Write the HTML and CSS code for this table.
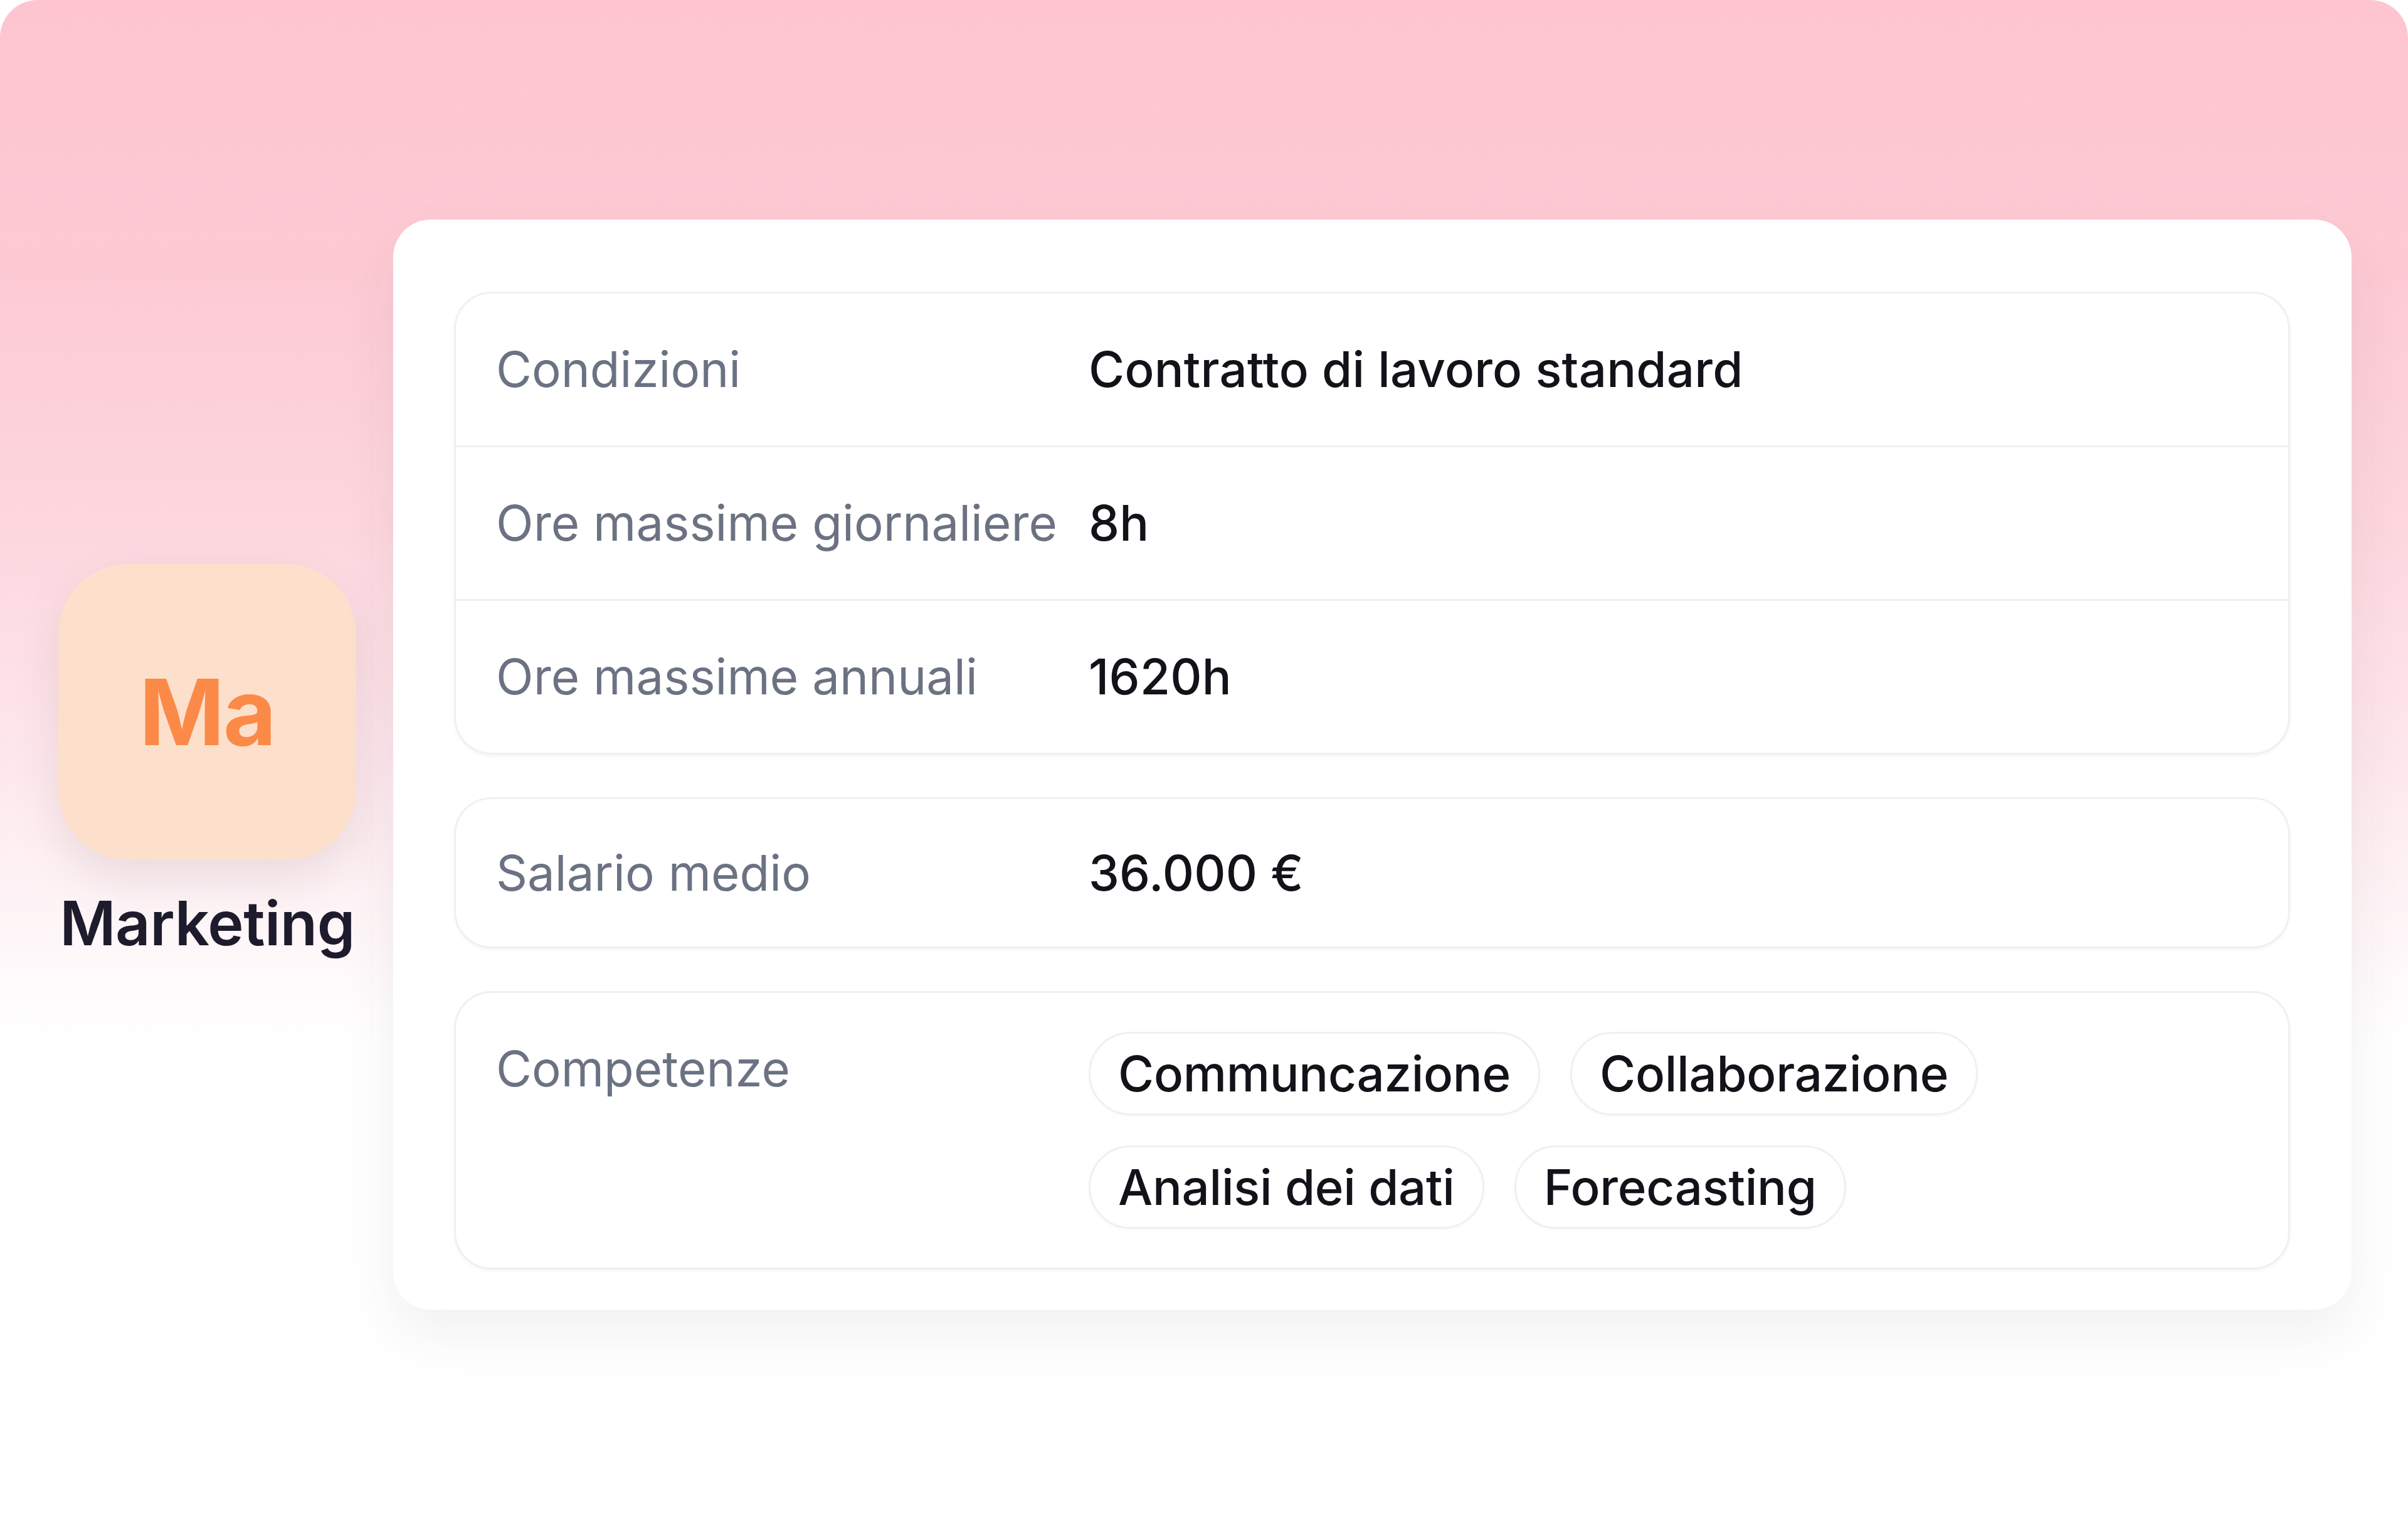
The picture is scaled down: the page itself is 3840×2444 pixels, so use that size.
FILE: index.html
```html
<!DOCTYPE html>
<html lang="it">
<head>
<meta charset="utf-8">
<title>Marketing</title>
<link rel="stylesheet" href="styles.css">
</head>
<body>
<div class="page">
  <div class="stage">
    <div class="team">
      <div class="team-icon">Ma</div>
      <div class="team-name">Marketing</div>
    </div>
    <div class="card">
      <div class="group">
        <div class="row">
          <span class="label">Condizioni</span>
          <span class="value">Contratto di lavoro standard</span>
        </div>
        <div class="row">
          <span class="label">Ore massime giornaliere</span>
          <span class="value">8h</span>
        </div>
        <div class="row">
          <span class="label">Ore massime annuali</span>
          <span class="value">1620h</span>
        </div>
      </div>
      <div class="group">
        <div class="row row-single">
          <span class="label">Salario medio</span>
          <span class="value">36.000 €</span>
        </div>
      </div>
      <div class="group">
        <div class="row row-skills">
          <span class="label">Competenze</span>
          <div class="chips">
            <span class="chip">Communcazione</span>
            <span class="chip">Collaborazione</span>
            <span class="chip">Analisi dei dati</span>
            <span class="chip">Forecasting</span>
          </div>
        </div>
      </div>
    </div>
  </div>
</div>
</body>
</html>
```
FILE: styles.css
```css
html, body {
  margin: 0;
  padding: 0;
}

body {
  width: 3840px;
  height: 2444px;
  overflow: hidden;
  background: #ffffff;
  font-family: Inter, "Noto Sans", "Liberation Sans", sans-serif;
}

.page {
  height: 2444px;
  border-radius: 60px 60px 0 0;
  background: linear-gradient(180deg, #fec5d0 0%, #fdcad4 18%, #fdd6de 34%, #fde8ed 50%, #fef5f7 60%, #ffffff 68%);
}

.stage {
  display: flex;
  align-items: center;
  padding: 350px 0 0 93px;
}

.team {
  width: 475px;
  margin-right: 59px;
  padding-bottom: 8px;
  display: flex;
  flex-direction: column;
  align-items: center;
}

.team-icon {
  width: 475px;
  height: 472px;
  border-radius: 112px;
  background: #fde0cb;
  color: #fb8a48;
  font-weight: 700;
  font-size: 146px;
  letter-spacing: -2px;
  display: flex;
  align-items: center;
  justify-content: center;
  box-shadow: 0 30px 70px rgba(120, 90, 100, 0.14);
}

.team-name {
  margin-top: 42px;
  font-size: 97px;
  line-height: 118px;
  font-weight: 600;
  color: #1d1b2c;
  letter-spacing: -0.5px;
}

.card {
  width: 3123px;
  box-sizing: border-box;
  padding: 115px 98px 64px 97px;
  background: #ffffff;
  border-radius: 60px;
  box-shadow: 0 40px 90px rgba(60, 50, 60, 0.07);
  display: flex;
  flex-direction: column;
  gap: 68px;
}

.group {
  border: 3px solid #eef0f2;
  border-radius: 60px;
  box-shadow: 0 3px 5px rgba(0, 0, 0, 0.035);
  background: #ffffff;
}

.row {
  display: flex;
  align-items: center;
  min-height: 242px;
  padding: 0 64px;
  font-size: 78px;
  line-height: 1.2;
}

.row + .row {
  border-top: 3px solid #eef0f2;
}

.row-single {
  min-height: 235px;
}

.row-skills {
  align-items: flex-start;
  padding-top: 62px;
  padding-bottom: 62px;
  min-height: 0;
}

.row-skills .label {
  padding-top: 12px;
}

.label {
  width: 945px;
  flex-shrink: 0;
  color: #6b7282;
  font-weight: 400;
}

.value {
  color: #111318;
  font-weight: 450;
  letter-spacing: 0.2px;
}

.chips {
  flex: 1;
  display: flex;
  flex-wrap: wrap;
  gap: 48px;
}

.chip {
  height: 133px;
  box-sizing: border-box;
  display: inline-flex;
  align-items: center;
  padding: 0 44px;
  border: 3px solid #f0f0f1;
  border-radius: 70px;
  color: #111318;
  font-weight: 450;
  letter-spacing: -0.3px;
  box-shadow: 0 2px 4px rgba(0, 0, 0, 0.03);
}
```
